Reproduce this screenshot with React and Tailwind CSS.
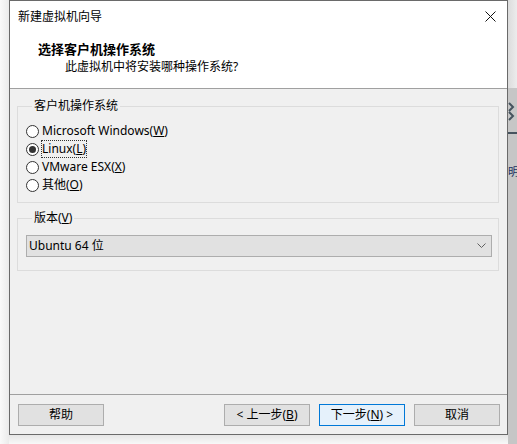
import React from 'react';

const font = { fontFamily: '"Noto Sans", "Noto Sans CJK SC", sans-serif' };

function Radio({ checked, children, focused }) {
  return (
    <div className="flex h-[18px] items-center">
      <span className="flex h-[13px] w-[13px] items-center justify-center rounded-full border border-[#333] bg-white">
        {checked && <span className="h-[7px] w-[7px] rounded-full bg-[#333]" />}
      </span>
      <span
        className={
          'ml-[3px] leading-[16px] ' +
          (focused ? 'outline outline-1 outline-dotted outline-[#333]' : '')
        }
      >
        {children}
      </span>
    </div>
  );
}

function Button({ children, primary }) {
  return (
    <button
      className={
        'flex h-[22px] w-[86px] items-center justify-center border text-[12px] leading-none text-black ' +
        (primary ? 'border-[#0078d7] bg-[#e5f1fb]' : 'border-[#adadad] bg-[#e1e1e1]')
      }
    >
      {children}
    </button>
  );
}

export default function App() {
  return (
    <div className="flex h-[444px] w-[517px] overflow-hidden bg-[#f4f4f4] text-[12px] text-black" style={font}>
      {/* shadow on the left */}
      <div className="w-[9px] bg-gradient-to-r from-[#fafafa] to-[#ebebeb]" />

      <div className="flex w-[499px] flex-col">
        <div className="flex h-[435px] flex-col border border-[#6a6a6a] bg-[#f0f0f0]">
          {/* title bar + header */}
          <div className="h-[88px] border-b border-[#a0a0a0] bg-white">
            <div className="flex h-[31px] items-center justify-between pl-[8px] pr-[10px]">
              <span className="leading-[16px]">新建虚拟机向导</span>
              <svg width="11" height="11" viewBox="0 0 11 11" className="mr-[1px]">
                <path d="M0.5 0.5 L10.5 10.5 M10.5 0.5 L0.5 10.5" stroke="#111" strokeWidth="1" />
              </svg>
            </div>
            <div className="pl-[28px] pt-[8px] text-[13px] font-bold leading-[18px]">选择客户机操作系统</div>
            <div className="pl-[55px] leading-[18px]">此虚拟机中将安装哪种操作系统?</div>
          </div>

          {/* body */}
          <div className="pl-[7px] pr-[8px] pt-[9px]">
            <fieldset className="border border-[#dcdcdc] pb-[8px] pl-[8px]">
              <legend className="ml-[6px] px-[2px] leading-[16px]">客户机操作系统</legend>
              <div className="pt-[8px]">
                <Radio>
                  Microsoft Windows(<span className="underline">W</span>)
                </Radio>
                <Radio checked focused>
                  Linux(<span className="underline">L</span>)
                </Radio>
                <Radio>
                  VMware ESX(<span className="underline">X</span>)
                </Radio>
                <Radio>
                  其他(<span className="underline">O</span>)
                </Radio>
              </div>
            </fieldset>

            <fieldset className="mt-[7px] border border-[#dcdcdc] pb-[13px] pl-[8px] pr-[6px]">
              <legend className="ml-[6px] px-[2px] leading-[16px]">
                版本(<span className="underline">V</span>)
              </legend>
              <div className="mt-[9px] flex h-[22px] items-center justify-between border border-[#adadad] bg-[#e1e1e1] pl-[2px] pr-[5px]">
                <span className="leading-[16px]">Ubuntu 64 位</span>
                <svg width="9" height="6" viewBox="0 0 9 6">
                  <path d="M0.5 0.5 L4.5 4.5 L8.5 0.5" stroke="#606060" strokeWidth="1" fill="none" />
                </svg>
              </div>
            </fieldset>
          </div>

          {/* footer */}
          <div className="mt-auto border-t border-[#a0a0a0] pb-[8px] pl-[8px] pr-[7px] pt-[9px]">
            <div className="flex items-center justify-between">
              <Button>帮助</Button>
              <div className="flex gap-[9px]">
                <Button>
                  &lt; 上一步(<span className="underline">B</span>)
                </Button>
                <Button primary>
                  下一步(<span className="underline">N</span>) &gt;
                </Button>
                <Button>取消</Button>
              </div>
            </div>
          </div>
        </div>
        <div className="flex-1 bg-gradient-to-b from-[#e6e6e6] to-[#f8f8f8]" />
      </div>

      {/* window behind, on the right */}
      <div className="flex w-[9px] flex-col overflow-hidden">
        <div className="h-[88px] bg-gradient-to-r from-[#dcdcdc] to-[#ececec]" />
        <div className="flex-1 bg-[#c6c6c6] pt-[14px]">
          <svg width="9" height="40" viewBox="0 0 9 40">
            <path d="M1 1 L5 5 L1 9 M1 10 L5 14 L1 18" stroke="#46535e" strokeWidth="2" fill="none" />
            <rect x="0" y="30" width="9" height="2" fill="#46535e" />
          </svg>
          <div className="mt-[24px] text-[11px] leading-[12px] text-[#203060]">明</div>
        </div>
      </div>
    </div>
  );
}
